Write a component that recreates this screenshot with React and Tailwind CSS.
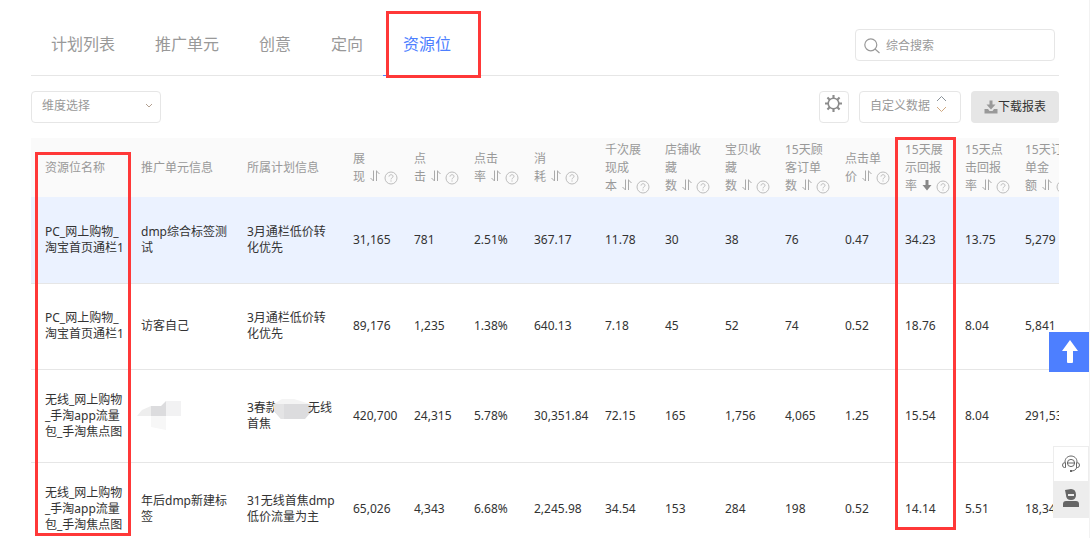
import React, { useState } from 'react';

const TABS = ['计划列表', '推广单元', '创意', '定向', '资源位'];

// lines: header label, last line carries the sort and help icons
const COLUMNS = [
    { key: 'name', lines: ['资源位名称'], plain: true, width: 'w-[110px]' },
    { key: 'unit', lines: ['推广单元信息'], plain: true, width: 'w-[106px]' },
    { key: 'plan', lines: ['所属计划信息'], plain: true, width: 'w-[106px]' },
    { key: 'impressions', lines: ['展', '现'], width: 'w-[61px]' },
    { key: 'clicks', lines: ['点', '击'], width: 'w-[60px]' },
    { key: 'ctr', lines: ['点击', '率'], width: 'w-[60px]' },
    { key: 'cost', lines: ['消', '耗'], width: 'w-[71px]' },
    { key: 'cpm', lines: ['千次展', '现成', '本'], width: 'w-[60px]' },
    { key: 'shopFav', lines: ['店铺收', '藏', '数'], width: 'w-[60px]' },
    { key: 'itemFav', lines: ['宝贝收', '藏', '数'], width: 'w-[60px]' },
    { key: 'orders', lines: ['15天顾', '客订单', '数'], width: 'w-[60px]' },
    { key: 'cpc', lines: ['点击单', '价'], width: 'w-[60px]' },
    { key: 'viewRoi', lines: ['15天展', '示回报', '率'], width: 'w-[60px]', sorted: true },
    { key: 'clickRoi', lines: ['15天点', '击回报', '率'], width: 'w-[60px]' },
    { key: 'revenue', lines: ['15天订', '单金', '额'], width: 'w-[60px]' },
];

const ROWS = [
    { name: 'PC_网上购物_\n淘宝首页通栏1', unit: 'dmp综合标签测\n试', plan: '3月通栏低价转\n化优先', values: ['31,165', '781', '2.51%', '367.17', '11.78', '30', '38', '76', '0.47', '34.23', '13.75', '5,279'] },
    { name: 'PC_网上购物_\n淘宝首页通栏1', unit: '访客自己', plan: '3月通栏低价转\n化优先', values: ['89,176', '1,235', '1.38%', '640.13', '7.18', '45', '52', '74', '0.52', '18.76', '8.04', '5,841'] },
    { name: '无线_网上购物\n_手淘app流量\n包_手淘焦点图', unit: null, plan: null, values: ['420,700', '24,315', '5.78%', '30,351.84', '72.15', '165', '1,756', '4,065', '1.25', '15.54', '8.04', '291,536'] },
    { name: '无线_网上购物\n_手淘app流量\n包_手淘焦点图', unit: '年后dmp新建标\n签', plan: '31无线首焦dmp\n低价流量为主', values: ['65,026', '4,343', '6.68%', '2,245.98', '34.54', '153', '284', '198', '0.52', '14.14', '5.51', '18,346'] },
];

const SortIcon = () => (
    <svg width="10" height="12" viewBox="0 0 10 12" fill="none" stroke="#aaa">
        <path d="M3.5 0.5V11M3.5 11L0.5 8M6.5 11V0.5M6.5 1L9.5 4" />
    </svg>
);

const SortedDownIcon = () => (
    <svg width="10" height="12" viewBox="0 0 10 12" fill="#888">
        <path d="M3.5 1H6.5V6H9.5L5 11.5L0.5 6H3.5Z" />
    </svg>
);

const HelpIcon = () => (
    <svg width="14" height="14" viewBox="0 0 14 14" fill="none" stroke="#bdbdbd">
        <circle cx="7" cy="7" r="6" />
        <path d="M5 5.6C5 3.1 9 3.1 9 5.4C9 6.8 7 6.8 7 8.4M7 9.4V10.6" />
    </svg>
);

const HeaderCell = ({ column }) => {
    const last = column.lines[column.lines.length - 1];
    return (
        <th scope="col" className="p-0 text-left align-middle font-normal whitespace-nowrap first:pl-[14px]">
            {column.lines.slice(0, -1).map((line) => (
                <div key={line}>{line}</div>
            ))}
            <div className="flex h-[18px] items-center">
                <span>{last}</span>
                {!column.plain && (
                    <>
                        <button aria-label="排序" className="ml-1 flex w-[11px] justify-center pb-0.5">
                            {column.sorted ? <SortedDownIcon /> : <SortIcon />}
                        </button>
                        <button aria-label="说明" className="ml-1 pt-0.5">
                            <HelpIcon />
                        </button>
                    </>
                )}
            </div>
        </th>
    );
};

// Smudge over a hidden unit name
const UnitMask = () => (
    <svg className="-ml-1" width="44" height="30" viewBox="0 0 44 30">
        <path d="M0 15L5 9L14 5V15Z" fill="#eee" />
        <path d="M14 5H24L29 0V15H14Z" fill="#dcdcde" />
        <path d="M29 0H44V15H29Z" fill="#f2f2f3" />
        <path d="M14 15H29V29L14 26Z" fill="#f7f7f7" />
    </svg>
);

const MaskedPlan = () => (
    <>
        <div className="flex items-center">
            <span>3春款</span>
            <svg className="-mr-1 -ml-1 h-4 w-[38px] overflow-visible" viewBox="0 0 38 16">
                <path d="M0 4L8 -1H20L36 4Z" fill="#f4f4f4" />
                <path d="M0 4H37V12L31 19H7L0 11Z" fill="#dcdcde" />
                <path d="M0 4H10V19H7L0 11Z" fill="#e4e4e5" />
            </svg>
            <span>无线</span>
        </div>
        <div>首焦</div>
    </>
);

export default function App() {
    const [activeTab, setActiveTab] = useState('资源位');

    return (
        <div className="relative h-screen overflow-hidden border-r border-[#f2f2f2] bg-white pl-[31px] pr-[30px] font-['Noto_Sans','Noto_Sans_CJK_SC',sans-serif] text-xs text-[#333]">
            <header className="flex h-[76px] items-end justify-between border-b border-[#e6e6e6]">
                <nav className="flex">
                    {TABS.map((tab) => (
                        <button
                            key={tab}
                            onClick={() => setActiveTab(tab)}
                            className={`-mb-px h-[60px] border-b px-5 pb-1 text-base ${activeTab === tab ? 'border-[#4d7fff] text-[#4d7fff]' : 'border-transparent text-[#999]'}`}
                        >
                            {tab}
                        </button>
                    ))}
                </nav>
                <label className="mr-1 mb-[14px] flex h-8 w-[200px] items-center rounded border border-[#e6e6e6] px-2 pt-0.5">
                    <svg width="16" height="16" viewBox="0 0 16 16" fill="none" stroke="#999" strokeWidth="1.2">
                        <circle cx="6.8" cy="6.8" r="6" />
                        <path d="M11 11L15.5 15" />
                    </svg>
                    <input aria-label="综合搜索" placeholder="综合搜索" className="ml-1.5 min-w-0 flex-1 outline-none placeholder:text-[#999]" />
                </label>
            </header>

            <div className="flex items-center justify-between py-[15px]">
                <div className="relative">
                    <select aria-label="维度选择" className="h-8 w-[130px] appearance-none rounded border border-[#e6e6e6] bg-white px-2.5 pb-0.5 text-[#999]">
                        <option>维度选择</option>
                    </select>
                    <svg className="pointer-events-none absolute top-3 right-2" width="8" height="6" viewBox="0 0 8 6" fill="none" stroke="#b3a090">
                        <path d="M1 1L4 4L7 1" />
                    </svg>
                </div>
                <div className="flex">
                    <button aria-label="设置" className="mr-[10px] flex h-8 w-[30px] justify-center rounded border border-[#e6e6e6] pt-[3px] pr-px">
                        <svg width="17" height="17" viewBox="0 0 16 16" fill="none" stroke="#8c8c8c">
                            <circle cx="8" cy="8" r="5" strokeWidth="1.5" />
                            <path strokeWidth="2" d="M8 0V3M8 13V16M0 8H3M13 8H16M2.3 2.3L4.4 4.4M11.6 11.6L13.7 13.7M2.3 13.7L4.4 11.6M11.6 4.4L13.7 2.3" />
                        </svg>
                    </button>
                    <button className="mr-[10px] flex h-8 w-[102px] items-center rounded border border-[#e6e6e6] px-2.5 pb-0.5 text-[#999]">
                        自定义数据
                        <svg className="mb-1 ml-1.5" width="11" height="18" viewBox="0 0 11 18" fill="none">
                            <path d="M1 6L5.5 1.5L10 6" stroke="#8a9299" />
                            <path d="M1 12L5.5 16.5L10 12" stroke="#d0a880" />
                        </svg>
                    </button>
                    <button className="flex h-8 w-[88px] items-center justify-center rounded bg-[#e6e6e6]">
                        <svg width="14" height="14" viewBox="0 0 14 14" fill="#999">
                            <path d="M5.5 0.5H8.5V4.5H11.5L7 9.5L2.5 4.5H5.5Z" />
                            <path d="M0.5 9H4L5.5 11H8.5L10 9H13.5V13.5H0.5Z" />
                        </svg>
                        下载报表
                    </button>
                </div>
            </div>

            <div className="overflow-x-auto">
                <table className="w-[1054px] min-w-full table-fixed">
                    <colgroup>
                        {COLUMNS.map((column) => (
                            <col key={column.key} className={column.width} />
                        ))}
                    </colgroup>
                    <thead>
                        <tr className="h-[59px] bg-[#fafafa] leading-[18px] text-[#999]">
                            {COLUMNS.map((column) => (
                                <HeaderCell key={column.key} column={column} />
                            ))}
                        </tr>
                    </thead>
                    <tbody>
                        {ROWS.map((row, i) => (
                            <tr key={i} className={`h-[86px] border-b border-[#e6e6e6] leading-4 ${i === 0 ? 'bg-[#ebf2ff]' : ''}`}>
                                <td className="py-[22px] pr-0 pl-[14px] whitespace-pre">{row.name}</td>
                                <td className="p-0 whitespace-pre">{row.unit || <UnitMask />}</td>
                                <td className="p-0 whitespace-pre">{row.plan || <MaskedPlan />}</td>
                                {row.values.map((value, j) => (
                                    <td key={j} className="p-0 whitespace-nowrap">{value}</td>
                                ))}
                            </tr>
                        ))}
                    </tbody>
                </table>
            </div>

            {/* Highlight frames */}
            <div className="pointer-events-none absolute top-[11px] left-[386px] h-[67px] w-[95px] border-3 border-[#ff3838]" />
            <div className="pointer-events-none absolute top-[152px] left-[35px] h-[384px] w-[96px] border-3 border-[#ff3838]" />
            <div className="pointer-events-none absolute top-[137px] left-[895px] h-[393px] w-[61px] border-3 border-[#ff3838]" />

            {/* Floating actions */}
            <button aria-label="返回顶部" className="absolute top-[332px] right-0 flex h-10 w-10 items-center justify-center bg-[#4d7fff] pl-0.5">
                <svg width="16" height="24" viewBox="0 0 16 24" fill="#fff">
                    <path d="M8 0L16 11H11V22Q11 23 10 23H6Q5 23 5 22V11H0Z" />
                </svg>
            </button>
            <div className="absolute top-[446px] right-0 flex w-9 flex-col border border-[#ededed] bg-white">
                <button aria-label="在线客服" className="flex h-[34px] items-center justify-center">
                    <svg width="18" height="18" viewBox="0 0 18 18" fill="none" stroke="#666">
                        <path d="M3 7C3 -1 15 -1 15 7M15 12C14 15 12 16 9 16" />
                        <circle cx="9" cy="8" r="3.6" />
                        <path d="M5.5 8H12.5M3.5 7.5V12.5H2.5Q0.5 12.5 0.5 10Q0.5 7.5 3.5 7.5M14.5 7.5V12.5H15.5Q17.5 12.5 17.5 10Q17.5 7.5 14.5 7.5" />
                        <path d="M8 16H10" strokeWidth="2" />
                    </svg>
                </button>
                <button aria-label="我的客服" className="flex h-9 items-center justify-center bg-[#ededed] pb-0.5">
                    <svg width="18" height="18" viewBox="0 0 18 18" fill="#666">
                        <path d="M3 1L9 0Q14 0 14 6Q14 11 9 11Q4 11 4 6Z" />
                        <path d="M1 18V15Q1 12 4 12H14Q17 12 17 15V18Z" />
                        <path d="M6 5H12V7H6Z" fill="#ededed" />
                    </svg>
                </button>
            </div>
        </div>
    );
}
